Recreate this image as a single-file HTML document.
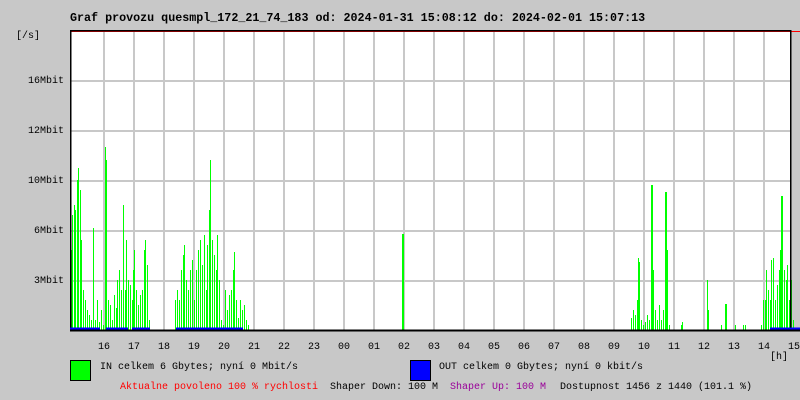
<!DOCTYPE html>
<html><head><meta charset="utf-8">
<style>
html,body{margin:0;padding:0;}
body{width:800px;height:400px;background:#c8c8c8;position:relative;overflow:hidden;font-family:"Liberation Mono",monospace;}
.t{position:absolute;white-space:pre;font-size:10px;line-height:10px;color:#000;}
.h{position:absolute;top:343px;width:20px;text-align:center;font-size:10px;line-height:10px;}
.title{position:absolute;left:70px;top:12px;font-size:11.7px;font-weight:bold;white-space:pre;line-height:12px;}
</style></head><body>
<div class="title">Graf provozu quesmpl_172_21_74_183 od: 2024-01-31 15:08:12 do: 2024-02-01 15:07:13</div>
<svg width="800" height="400" style="position:absolute;left:0;top:0" xmlns="http://www.w3.org/2000/svg" shape-rendering="crispEdges">
<rect x="70" y="30" width="721" height="301" fill="#fff"/>
<g stroke="#c8c8c8" stroke-width="2">
<path d="M104 31V330M134 31V330M164 31V330M194 31V330M224 31V330M254 31V330M284 31V330M314 31V330M344 31V330M374 31V330M404 31V330M434 31V330M464 31V330M494 31V330M524 31V330M554 31V330M584 31V330M614 31V330M644 31V330M674 31V330M704 31V330M734 31V330M764 31V330"/>
<path d="M71 81H790M71 131H790M71 181H790M71 231H790M71 281H790"/>
</g>
<path id="g" stroke="#00ff00" stroke-width="1" fill="none"/>
<path d="M70 31.5H800" stroke="#ff0000" stroke-width="1"/>
<path d="M70 330.5H800" stroke="#000" stroke-width="2"/>
<path d="M70.5 30V331M790.5 30V331M70 30.5H791" stroke="#000" stroke-width="1.5"/>
<path d="M70 328.5H100M106 328.5H128M132 328.5H150M176 328.5H243M770 328.5H800" stroke="#0000ff" stroke-width="2"/>
</svg>
<script>
var d="70:240,71:250,72:215,74:205,75:210,77:180,78:168,80:190,81:240,83:290,85:300,87:310,89:315,91:320,93:228,95:320,97:300,99:322,101:310,103:325,105:147,106:160,108:300,110:305,112:320,114:295,116:308,117:280,119:270,121:290,123:205,125:290,126:240,128:280,130:285,132:300,133:270,134:250,136:290,138:305,140:295,142:290,144:250,145:240,147:265,149:320,175:300,177:290,179:300,181:270,183:255,184:245,186:280,188:290,190:270,192:260,194:300,196:270,198:250,200:240,202:265,204:235,206:290,207:245,209:210,210:160,212:240,214:255,216:270,217:235,219:280,221:320,223:325,225:290,227:310,229:295,231:290,233:270,234:252,236:300,238:318,240:300,242:310,244:305,246:320,248:325,402:234,403:234,631:318,633:310,635:315,637:300,638:258,639:262,641:320,643:325,645:322,647:315,649:320,651:185,652:185,653:270,655:310,657:320,659:305,661:320,663:310,665:192,666:192,667:250,669:325,681:325,682:322,707:280,708:310,721:325,725:304,726:304,735:325,743:325,745:325,761:325,763:300,765:300,766:270,768:290,770:300,771:260,773:258,775:300,777:285,779:270,780:250,781:196,782:196,784:270,786:280,787:265,789:300,791:280,793:320";
var p="";d.split(",").forEach(function(s){var a=s.split(":");p+="M"+(+a[0]+0.5)+" 330V"+a[1];});
document.getElementById("g").setAttribute("d",p);
var hs=["16","17","18","19","20","21","22","23","00","01","02","03","04","05","06","07","08","09","10","11","12","13","14","15"];
hs.forEach(function(h,i){var e=document.createElement("div");e.className="h";e.textContent=h;e.style.left=(104+30*i-10+(i==23?0:0))+"px";document.body.appendChild(e);});
</script>
<div class="t" style="left:16px;top:32px">[/s]</div>
<div class="t" style="left:28px;top:77px">16Mbit</div>
<div class="t" style="left:28px;top:127px">12Mbit</div>
<div class="t" style="left:28px;top:177px">10Mbit</div>
<div class="t" style="left:34px;top:227px">6Mbit</div>
<div class="t" style="left:34px;top:277px">3Mbit</div>
<div class="t" style="left:770px;top:353px">[h]</div>
<div style="position:absolute;left:70px;top:360px;width:19px;height:19px;background:#00ff00;border:1px solid #000"></div>
<div class="t" style="left:100px;top:363px">IN celkem 6 Gbytes; nyní 0 Mbit/s</div>
<div style="position:absolute;left:410px;top:360px;width:19px;height:19px;background:#0000ff;border:1px solid #000"></div>
<div class="t" style="left:439px;top:363px">OUT celkem 0 Gbytes; nyní 0 kbit/s</div>
<div class="t" style="left:120px;top:383px;color:#ff0000">Aktualne povoleno 100 % rychlosti</div>
<div class="t" style="left:330px;top:383px">Shaper Down: 100 M</div>
<div class="t" style="left:450px;top:383px;color:#990099">Shaper Up: 100 M</div>
<div class="t" style="left:560px;top:383px">Dostupnost 1456 z 1440 (101.1 %)</div>
</body></html>
